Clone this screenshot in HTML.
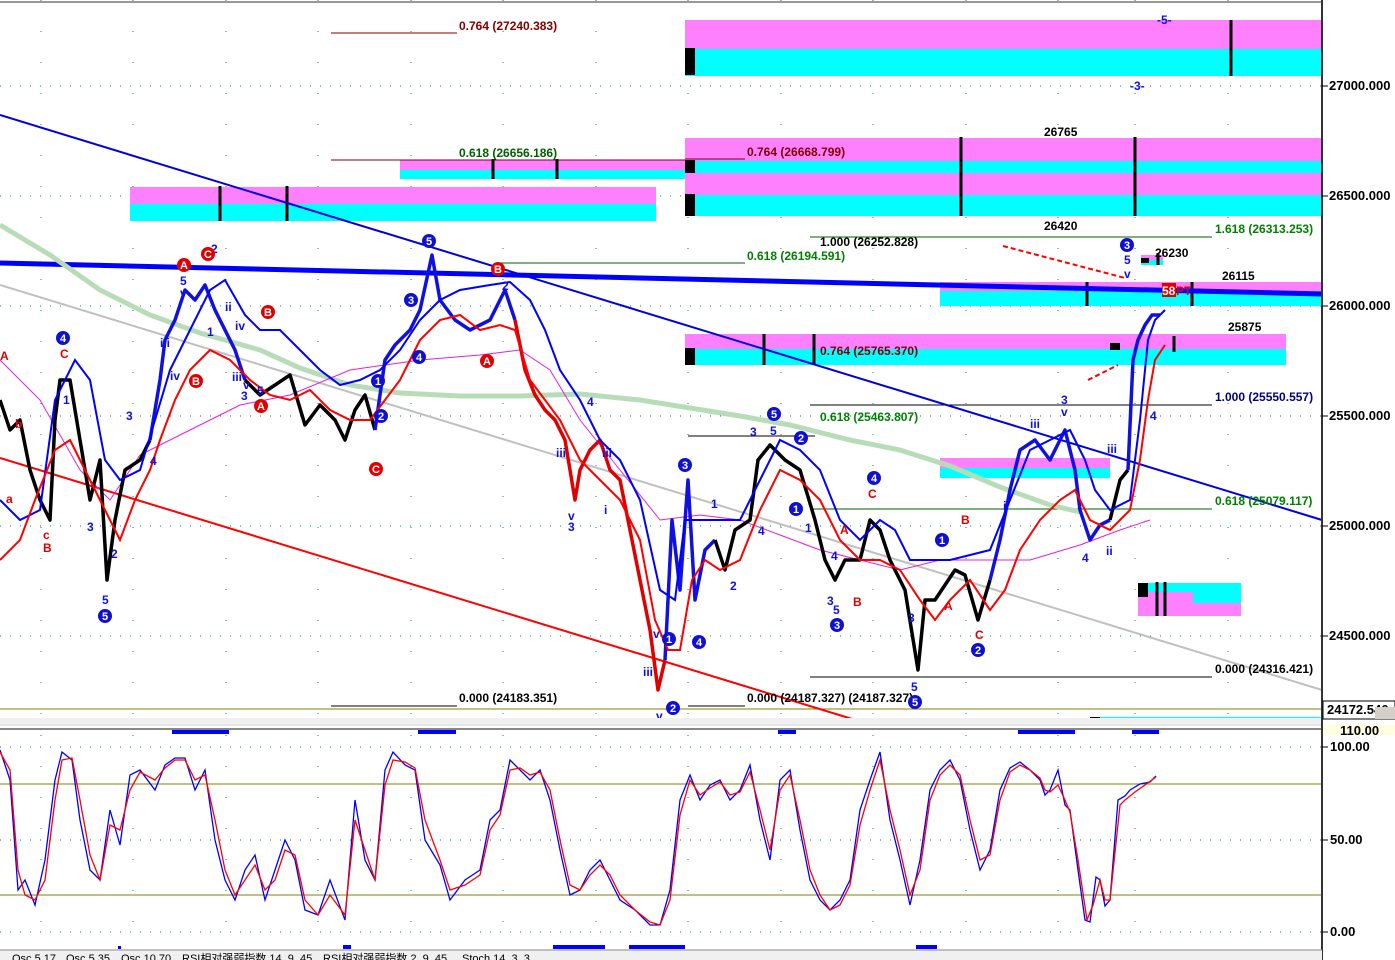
<!DOCTYPE html>
<html><head><meta charset="utf-8"><style>
html,body{margin:0;padding:0;background:#fff;width:1395px;height:960px;overflow:hidden}
svg{display:block;font-family:"Liberation Sans",sans-serif}
.lb{font-size:12px;font-weight:bold}
.ax{font-size:13px;font-weight:bold;fill:#000}
.w{font-size:12px;font-weight:bold;fill:#1010e0}
.r{font-size:12px;font-weight:bold;fill:#e00000}
</style></head><body>
<svg width="1395" height="960" viewBox="0 0 1395 960" xmlns="http://www.w3.org/2000/svg">
<rect x="0" y="0" width="1395" height="960" fill="#fff"/>
<line x1="0" y1="2" x2="1322" y2="2" stroke="#999" stroke-width="2"/>
<g stroke="#008080" stroke-width="1" stroke-dasharray="1,9">
<line x1="0" y1="86" x2="1322" y2="86"/><line x1="0" y1="196" x2="1322" y2="196"/>
<line x1="0" y1="306" x2="1322" y2="306"/><line x1="0" y1="416" x2="1322" y2="416"/>
<line x1="0" y1="526" x2="1322" y2="526"/><line x1="0" y1="636" x2="1322" y2="636"/>
<line x1="0" y1="747" x2="1322" y2="747"/><line x1="0" y1="840" x2="1322" y2="840"/><line x1="0" y1="932" x2="1322" y2="932"/>
</g>
<g stroke="#008080" stroke-width="1" stroke-dasharray="1,30">
<line x1="41" y1="0" x2="41" y2="718"/><line x1="133" y1="0" x2="133" y2="718"/><line x1="226" y1="0" x2="226" y2="718"/><line x1="318" y1="0" x2="318" y2="718"/><line x1="411" y1="0" x2="411" y2="718"/><line x1="503" y1="0" x2="503" y2="718"/><line x1="596" y1="0" x2="596" y2="718"/><line x1="688" y1="0" x2="688" y2="718"/><line x1="781" y1="0" x2="781" y2="718"/><line x1="873" y1="0" x2="873" y2="718"/><line x1="966" y1="0" x2="966" y2="718"/><line x1="1058" y1="0" x2="1058" y2="718"/><line x1="1135" y1="0" x2="1135" y2="718"/><line x1="1228" y1="0" x2="1228" y2="718"/>
<line x1="41" y1="735" x2="41" y2="950"/><line x1="133" y1="735" x2="133" y2="950"/><line x1="226" y1="735" x2="226" y2="950"/><line x1="318" y1="735" x2="318" y2="950"/><line x1="411" y1="735" x2="411" y2="950"/><line x1="503" y1="735" x2="503" y2="950"/><line x1="596" y1="735" x2="596" y2="950"/><line x1="688" y1="735" x2="688" y2="950"/><line x1="781" y1="735" x2="781" y2="950"/><line x1="873" y1="735" x2="873" y2="950"/><line x1="966" y1="735" x2="966" y2="950"/><line x1="1058" y1="735" x2="1058" y2="950"/><line x1="1135" y1="735" x2="1135" y2="950"/>
</g>
<rect x="685" y="20" width="637" height="29" fill="#ff80ff"/><rect x="685" y="49" width="637" height="27" fill="#00ffff"/><rect x="685" y="48" width="10" height="27" fill="#000"/>
<rect x="685" y="138" width="637" height="23" fill="#ff80ff"/><rect x="685" y="161" width="637" height="12" fill="#00ffff"/><rect x="685" y="173" width="637" height="22" fill="#ff80ff"/><rect x="685" y="195" width="637" height="21" fill="#00ffff"/>
<rect x="685" y="160" width="10" height="13" fill="#000"/><rect x="685" y="194" width="10" height="22" fill="#000"/>
<rect x="400" y="160" width="285" height="10" fill="#ff80ff"/><rect x="400" y="170" width="285" height="9" fill="#00ffff"/>
<rect x="130" y="187" width="526" height="17" fill="#ff80ff"/><rect x="130" y="204" width="526" height="17" fill="#00ffff"/>
<rect x="940" y="282" width="382" height="9" fill="#ff80ff"/><rect x="940" y="291" width="382" height="15" fill="#00ffff"/>
<rect x="685" y="334" width="601" height="15" fill="#ff80ff"/><rect x="685" y="349" width="601" height="16" fill="#00ffff"/><rect x="685" y="348" width="10" height="17" fill="#000"/>
<rect x="940" y="458" width="170" height="10" fill="#ff80ff"/><rect x="940" y="468" width="170" height="10" fill="#00ffff"/>
<rect x="1138" y="583" width="103" height="9" fill="#00ffff"/><rect x="1138" y="592" width="103" height="11" fill="#ff80ff"/><rect x="1138" y="603" width="103" height="13" fill="#ff80ff"/><rect x="1193" y="592" width="48" height="11" fill="#00ffff"/><rect x="1138" y="583" width="10" height="14" fill="#000"/>
<rect x="1141" y="255" width="22" height="5" fill="#ff80ff"/><rect x="1141" y="260" width="22" height="5" fill="#00ffff"/><rect x="1141" y="258" width="8" height="5" fill="#000"/>
<rect x="1100" y="717" width="222" height="6" fill="#00ffff"/><rect x="1090" y="717" width="10" height="6" fill="#000"/>
<rect x="1110" y="343" width="10" height="7" fill="#000"/>
<g stroke="#000" stroke-width="3">
<line x1="1231" y1="20" x2="1231" y2="76"/><line x1="961" y1="137" x2="961" y2="216"/><line x1="1135" y1="137" x2="1135" y2="216"/>
<line x1="220" y1="186" x2="220" y2="221"/><line x1="287" y1="186" x2="287" y2="221"/><line x1="493" y1="159" x2="493" y2="179"/><line x1="557" y1="159" x2="557" y2="179"/>
<line x1="764" y1="334" x2="764" y2="365"/><line x1="814" y1="334" x2="814" y2="365"/><line x1="1087" y1="282" x2="1087" y2="306"/><line x1="1192" y1="282" x2="1192" y2="306"/>
<line x1="1174" y1="336" x2="1174" y2="352"/><line x1="1157" y1="582" x2="1157" y2="616"/><line x1="1165" y1="582" x2="1165" y2="616"/><line x1="1158" y1="253" x2="1158" y2="265"/>
</g>
<g stroke-width="1">
<line x1="331" y1="33" x2="457" y2="33" stroke="#800000"/>
<line x1="331" y1="160" x2="685" y2="160" stroke="#800000"/>
<line x1="685" y1="159" x2="745" y2="159" stroke="#800000"/>
<line x1="810" y1="237" x2="1212" y2="237" stroke="#006000"/>
<line x1="500" y1="263" x2="745" y2="263" stroke="#006000"/>
<line x1="810" y1="405" x2="1212" y2="405" stroke="#000"/>
<line x1="688" y1="436" x2="815" y2="436" stroke="#000"/>
<line x1="810" y1="509" x2="1212" y2="509" stroke="#006000"/>
<line x1="810" y1="677" x2="1212" y2="677" stroke="#000"/>
<line x1="331" y1="706" x2="457" y2="706" stroke="#000"/>
<line x1="688" y1="706" x2="745" y2="706" stroke="#000"/>
<line x1="0" y1="709" x2="1322" y2="709" stroke="#808000"/>
</g>
<line x1="0" y1="263" x2="1322" y2="294" stroke="#0000ff" stroke-width="5"/>
<line x1="0" y1="115" x2="1322" y2="520" stroke="#0000e0" stroke-width="2"/>
<line x1="0" y1="458" x2="862" y2="722" stroke="#ff0000" stroke-width="2"/>
<line x1="0" y1="285" x2="1322" y2="690" stroke="#c0c0c0" stroke-width="2"/>
<polyline fill="none" stroke="#b8dcb8" stroke-width="5" points="0,225 50,255 100,290 150,315 200,333 260,350 300,368 350,385 400,393 460,396 520,396 580,394 640,400 690,408 740,416 790,425 850,440 900,450 950,466 1000,487 1050,505 1080,512"/>
<polyline fill="none" stroke="#e020e0" stroke-width="1" points="0,360 40,400 80,470 110,500 140,455 190,430 240,405 290,395 350,370 420,360 480,355 520,350 550,370 580,420 620,470 660,520 700,515 740,520 780,535 820,550 860,560 900,570 940,560 980,560 1030,560 1080,545 1120,530 1150,520"/>
<g stroke-width="3.5" fill="none" stroke-linejoin="round">
<polyline stroke="#000" points="0,400 10,430 20,420 30,470 40,500 50,520 55,420 60,380 70,380 80,440 90,500 100,460 107,580 115,520 125,470 140,460 150,440"/>
<polyline stroke="#1010e0" points="150,440 160,380 165,340 175,320 185,290 195,300 205,285 215,310 225,330 235,350 245,380"/>
<polyline stroke="#000" points="245,380 260,395 275,385 290,375 305,425 320,405 335,420 345,440 355,410 365,395 375,430"/>
<polyline stroke="#1010e0" points="375,430 385,360 395,345 410,330 420,310 432,255 440,300 455,320 470,330 490,320 505,290 515,320"/>
<polyline stroke="#e00000" points="515,320 525,370 535,395 545,410 555,420 565,440 575,500 580,470 590,450 600,440 610,470 620,480 630,530 640,580 650,630 658,690 665,660"/>
<polyline stroke="#1010e0" points="665,660 672,520 680,590 688,480 695,600 705,550 715,540"/>
<polyline stroke="#000" points="715,540 725,570 735,530 750,520 758,460 770,445 785,460 800,470 815,520 825,560 835,580 845,560 860,560 870,520 880,530 890,560 905,590 918,670 925,600 935,600 945,585 955,570 965,575 978,620 990,580"/>
<polyline stroke="#1010e0" points="990,580 1000,540 1010,490 1020,450 1035,440 1050,460 1065,430 1075,470 1080,510 1090,540 1100,525 1110,520"/>
<polyline stroke="#000" points="1110,520 1120,480 1128,470"/>
<polyline stroke="#1010e0" points="1128,470 1133,360 1138,340 1145,325 1152,315 1160,315"/>
</g>
<polyline fill="none" stroke="#0000ff" stroke-width="2" points="0,500 20,520 40,510 55,400 75,360 90,380 105,460 120,480 140,470 155,420 170,370 190,330 210,290 225,280 245,315 260,330 280,330 300,350 320,370 340,385 360,380 380,370 400,350 420,320 440,300 460,290 490,285 510,282 530,300 545,330 560,370 580,400 600,440 620,460 640,500 660,590 675,600 685,520 700,520 715,520 740,520 760,480 780,440 800,450 820,470 840,520 860,540 880,520 895,530 910,560 930,560 950,560 970,555 990,550 1010,500 1030,450 1050,440 1070,430 1085,460 1095,490 1110,510 1130,500 1140,420 1148,340 1155,320 1165,310"/>
<polyline fill="none" stroke="#ff0000" stroke-width="2" points="0,560 20,540 35,500 55,450 70,440 85,470 100,500 120,540 135,500 150,470 160,440 175,400 190,370 210,350 230,360 250,380 270,395 290,400 310,390 330,410 350,420 370,420 385,400 400,380 420,340 440,320 460,315 480,330 500,325 515,330 530,380 545,400 560,420 580,460 600,480 620,500 640,540 655,620 668,650 680,650 692,580 705,560 720,570 740,560 760,510 780,470 800,480 820,500 840,540 860,560 880,560 900,570 920,600 935,620 950,600 970,580 990,610 1005,590 1020,550 1040,520 1060,500 1075,490 1090,520 1110,530 1130,510 1140,460 1148,400 1155,360 1165,345"/>
<text x="459" y="30" class="lb" fill="#800000">0.764 (27240.383)</text>
<text x="459" y="157" class="lb" fill="#006000">0.618 (26656.186)</text>
<text x="747" y="156" class="lb" fill="#800000">0.764 (26668.799)</text>
<text x="820" y="246" class="lb" fill="#000">1.000 (26252.828)</text>
<text x="747" y="260" class="lb" fill="#008000">0.618 (26194.591)</text>
<text x="820" y="355" class="lb" fill="#800000">0.764 (25765.370)</text>
<text x="820" y="421" class="lb" fill="#008000">0.618 (25463.807)</text>
<text x="1215" y="233" class="lb" fill="#008000">1.618 (26313.253)</text>
<text x="1215" y="401" class="lb" fill="#000080">1.000 (25550.557)</text>
<text x="1215" y="505" class="lb" fill="#008000">0.618 (25079.117)</text>
<text x="1215" y="673" class="lb" fill="#000">0.000 (24316.421)</text>
<text x="459" y="702" class="lb" fill="#000">0.000 (24183.351)</text>
<text x="747" y="702" class="lb" fill="#000">0.000 (24187.327) (24187.327)</text>
<text x="1044" y="136" class="lb" fill="#000">26765</text>
<text x="1044" y="230" class="lb" fill="#000">26420</text>
<text x="1155" y="257" class="lb" fill="#000">26230</text>
<text x="1222" y="280" class="lb" fill="#000">26115</text>
<text x="1228" y="331" class="lb" fill="#000">25875</text>
<rect x="1162" y="283" width="14" height="14" fill="#e00000"/><text x="1162" y="295" class="lb" fill="#fff">58</text><text x="1176" y="295" class="lb" fill="#e00000">PT</text>
<text x="1157" y="24" class="w">-5-</text><text x="1130" y="90" class="w">-3-</text>
<g class="w">
<text x="180" y="285">5</text><text x="180" y="297">v</text><text x="211" y="253">2</text><text x="225" y="311">ii</text><text x="207" y="336">1</text><text x="160" y="347">iii</text><text x="170" y="380">iv</text><text x="235" y="330">iv</text><text x="232" y="381">iii</text><text x="243" y="389">v</text><text x="241" y="400">3</text><text x="257" y="395">5</text>
<text x="63" y="404">1</text><text x="126" y="420">3</text><text x="150" y="465">4</text><text x="102" y="604">5</text><text x="111" y="558">2</text><text x="87" y="531">3</text><text x="502" y="290">2</text><text x="556" y="457">iii</text><text x="568" y="520">v</text><text x="568" y="531">3</text><text x="587" y="406">4</text><text x="602" y="457">iii</text><text x="604" y="514">i</text>
<text x="643" y="676">iii</text><text x="653" y="638">v</text><text x="656" y="720">v</text><text x="750" y="436">3</text><text x="770" y="435">5</text><text x="758" y="535">4</text><text x="730" y="590">2</text><text x="711" y="508">1</text><text x="805" y="532">1</text><text x="831" y="560">4</text><text x="827" y="605">3</text><text x="833" y="614">5</text><text x="908" y="622">3</text><text x="911" y="691">5</text>
<text x="1030" y="428">iii</text><text x="1061" y="404">3</text><text x="1061" y="416">v</text><text x="1003" y="510">i</text><text x="1082" y="562">4</text><text x="1106" y="555">ii</text><text x="1107" y="453">iii</text><text x="1124" y="264">5</text><text x="1124" y="278">v</text><text x="1150" y="420">4</text>
</g>
<g class="r">
<text x="60" y="358">C</text><text x="43" y="539">c</text><text x="43" y="552">B</text><text x="6" y="503">a</text><text x="15" y="428">b</text><text x="0" y="360">A</text>
<text x="840" y="534">A</text><text x="853" y="606">B</text><text x="868" y="498">C</text><text x="961" y="524">B</text><text x="975" y="639">C</text><text x="944" y="610">A</text>
</g>
<g font-size="11" font-weight="bold" text-anchor="middle">
<g fill="#1010d0"><circle cx="63" cy="338" r="7"/><circle cx="105" cy="616" r="7"/><circle cx="429" cy="241" r="7"/><circle cx="411" cy="300" r="7"/><circle cx="419" cy="357" r="7"/><circle cx="378" cy="381" r="7"/><circle cx="381" cy="416" r="7"/><circle cx="685" cy="465" r="7"/><circle cx="669" cy="639" r="7"/><circle cx="699" cy="642" r="7"/><circle cx="673" cy="708" r="7"/><circle cx="774" cy="414" r="7"/><circle cx="801" cy="438" r="7"/><circle cx="796" cy="509" r="7"/><circle cx="874" cy="478" r="7"/><circle cx="837" cy="625" r="7"/><circle cx="942" cy="540" r="7"/><circle cx="978" cy="650" r="7"/><circle cx="915" cy="702" r="7"/><circle cx="1127" cy="245" r="7"/></g>
<g fill="#fff"><text x="63" y="342">4</text><text x="105" y="620">5</text><text x="429" y="245">5</text><text x="411" y="304">3</text><text x="419" y="361">4</text><text x="378" y="385">1</text><text x="381" y="420">2</text><text x="685" y="469">3</text><text x="669" y="643">1</text><text x="699" y="646">4</text><text x="673" y="712">2</text><text x="774" y="418">5</text><text x="801" y="442">2</text><text x="796" y="513">1</text><text x="874" y="482">4</text><text x="837" y="629">3</text><text x="942" y="544">1</text><text x="978" y="654">2</text><text x="915" y="706">5</text><text x="1127" y="249">3</text></g>
<g fill="#e00000"><circle cx="184" cy="265" r="7"/><circle cx="208" cy="254" r="7"/><circle cx="268" cy="312" r="7"/><circle cx="196" cy="381" r="7"/><circle cx="261" cy="406" r="7"/><circle cx="376" cy="469" r="7"/><circle cx="498" cy="269" r="7"/><circle cx="487" cy="361" r="7"/></g>
<g fill="#fff"><text x="184" y="269">A</text><text x="208" y="258">C</text><text x="268" y="316">B</text><text x="196" y="385">B</text><text x="261" y="410">A</text><text x="376" y="473">C</text><text x="498" y="273">B</text><text x="487" y="365">A</text></g>
</g>
<g stroke="#ff0000" stroke-width="2" stroke-dasharray="5,3" fill="none"><line x1="1003" y1="246" x2="1125" y2="278"/><line x1="1088" y1="380" x2="1118" y2="365"/></g>
<rect x="0" y="718" width="1322" height="6" fill="#f0f0f0"/>
<line x1="0" y1="725" x2="1322" y2="725" stroke="#ccc"/>
<line x1="0" y1="729" x2="1322" y2="729" stroke="#888" stroke-width="2"/>
<g fill="#0000ff"><rect x="172" y="730" width="57" height="4"/><rect x="418" y="730" width="38" height="4"/><rect x="778" y="730" width="18" height="4"/><rect x="1018" y="730" width="57" height="4"/><rect x="1132" y="730" width="27" height="4"/>
<rect x="118" y="946" width="3" height="3"/><rect x="343" y="945" width="8" height="4"/><rect x="553" y="945" width="52" height="4"/><rect x="629" y="945" width="56" height="4"/><rect x="916" y="945" width="21" height="4"/></g>
<line x1="0" y1="784" x2="1322" y2="784" stroke="#808000"/><line x1="0" y1="895" x2="1322" y2="895" stroke="#808000"/>
<polyline fill="none" stroke="#0000ff" stroke-width="1.3" points="0,750 10,780 18,890 25,880 35,905 45,860 55,780 62,752 72,760 80,820 90,870 100,880 110,810 120,845 130,775 140,770 155,790 165,765 175,758 185,758 195,790 205,770 215,840 225,880 235,900 245,870 255,855 265,900 275,870 285,840 295,860 305,910 318,915 330,880 345,920 355,800 365,860 375,880 385,770 393,752 405,765 415,770 425,840 440,865 450,900 465,880 480,870 490,820 500,810 510,760 520,770 530,780 540,770 550,800 560,850 570,895 580,890 590,870 600,860 610,880 620,900 635,910 650,925 660,925 670,890 680,800 690,775 700,800 710,785 720,780 730,800 740,790 750,765 760,820 770,860 780,780 790,770 800,830 810,880 820,900 830,910 840,900 850,880 860,810 870,780 880,752 890,820 900,860 910,905 920,860 930,790 940,770 950,760 960,780 970,830 980,870 990,850 1000,790 1010,768 1020,762 1030,770 1040,780 1045,795 1050,790 1058,770 1065,805 1070,810 1078,870 1085,920 1090,922 1096,877 1100,880 1105,906 1110,900 1118,800 1125,796 1130,790 1140,784 1150,782 1156,776"/>
<polyline fill="none" stroke="#ff0000" stroke-width="1.3" points="0,752 10,770 18,870 25,895 35,900 45,880 55,800 62,760 72,758 80,800 90,855 100,880 110,825 120,830 130,790 140,772 155,780 165,768 175,760 185,760 195,780 205,775 215,820 225,870 235,895 245,880 255,865 265,890 275,880 285,850 295,855 305,900 318,915 330,895 345,915 355,820 365,850 375,880 385,785 393,760 405,762 415,768 425,820 440,860 450,890 465,885 480,875 490,830 500,815 510,770 520,768 530,775 540,772 550,790 560,840 570,885 580,890 590,875 600,865 610,875 620,895 635,910 650,922 660,925 670,900 680,815 690,780 700,795 710,788 720,782 730,795 740,792 750,772 760,810 770,850 780,790 790,775 800,820 810,870 820,895 830,910 840,905 850,885 860,825 870,790 880,760 890,810 900,850 910,895 920,870 930,800 940,775 950,765 960,775 970,820 980,860 990,855 1000,800 1010,772 1020,765 1030,770 1040,778 1045,790 1050,792 1058,785 1065,800 1070,812 1078,860 1087,920 1093,905 1100,880 1105,900 1110,900 1120,805 1125,800 1135,792 1145,785 1156,777"/>
<rect x="1322" y="0" width="73" height="960" fill="#fff"/>
<line x1="1322" y1="0" x2="1322" y2="960" stroke="#333" stroke-width="2"/>
<g stroke="#000"><line x1="1322" y1="86" x2="1328" y2="86"/><line x1="1322" y1="196" x2="1328" y2="196"/><line x1="1322" y1="306" x2="1328" y2="306"/><line x1="1322" y1="416" x2="1328" y2="416"/><line x1="1322" y1="526" x2="1328" y2="526"/><line x1="1322" y1="636" x2="1328" y2="636"/><line x1="1322" y1="747" x2="1328" y2="747"/><line x1="1322" y1="840" x2="1328" y2="840"/><line x1="1322" y1="932" x2="1328" y2="932"/></g>
<text x="1329" y="90" class="ax">27000.000</text><text x="1329" y="200" class="ax">26500.000</text><text x="1329" y="310" class="ax">26000.000</text><text x="1329" y="420" class="ax">25500.000</text><text x="1329" y="530" class="ax">25000.000</text><text x="1329" y="640" class="ax">24500.000</text>
<rect x="1323" y="701" width="72" height="18" fill="#fff" stroke="#000"/><text x="1327" y="714" class="ax">24172.546</text>
<rect x="1375" y="707" width="20" height="12" fill="#d4d0c8"/>
<rect x="1323" y="725" width="72" height="10" fill="#ffffe0"/><text x="1340" y="735" class="ax">110.00</text>
<text x="1330" y="751" class="ax">100.00</text><text x="1330" y="844" class="ax">50.00</text><text x="1330" y="936" class="ax">0.00</text>
<rect x="0" y="950" width="1322" height="10" fill="#f0f0f0"/>
<line x1="0" y1="950" x2="1322" y2="950" stroke="#888"/>
<g font-size="11" fill="#000"><text x="12" y="962">Osc 5,17</text><text x="66" y="962">Osc 5,35</text><text x="121" y="962">Osc 10,70</text><text x="182" y="962" font-family="Liberation Sans,Noto Sans CJK SC,sans-serif">RSI相对强弱指数 14, 9, 45</text><text x="323" y="962" font-family="Liberation Sans,Noto Sans CJK SC,sans-serif">RSI相对强弱指数 2, 9, 45</text><text x="462" y="962">Stoch 14, 3, 3</text></g>
</svg>
</body></html>
